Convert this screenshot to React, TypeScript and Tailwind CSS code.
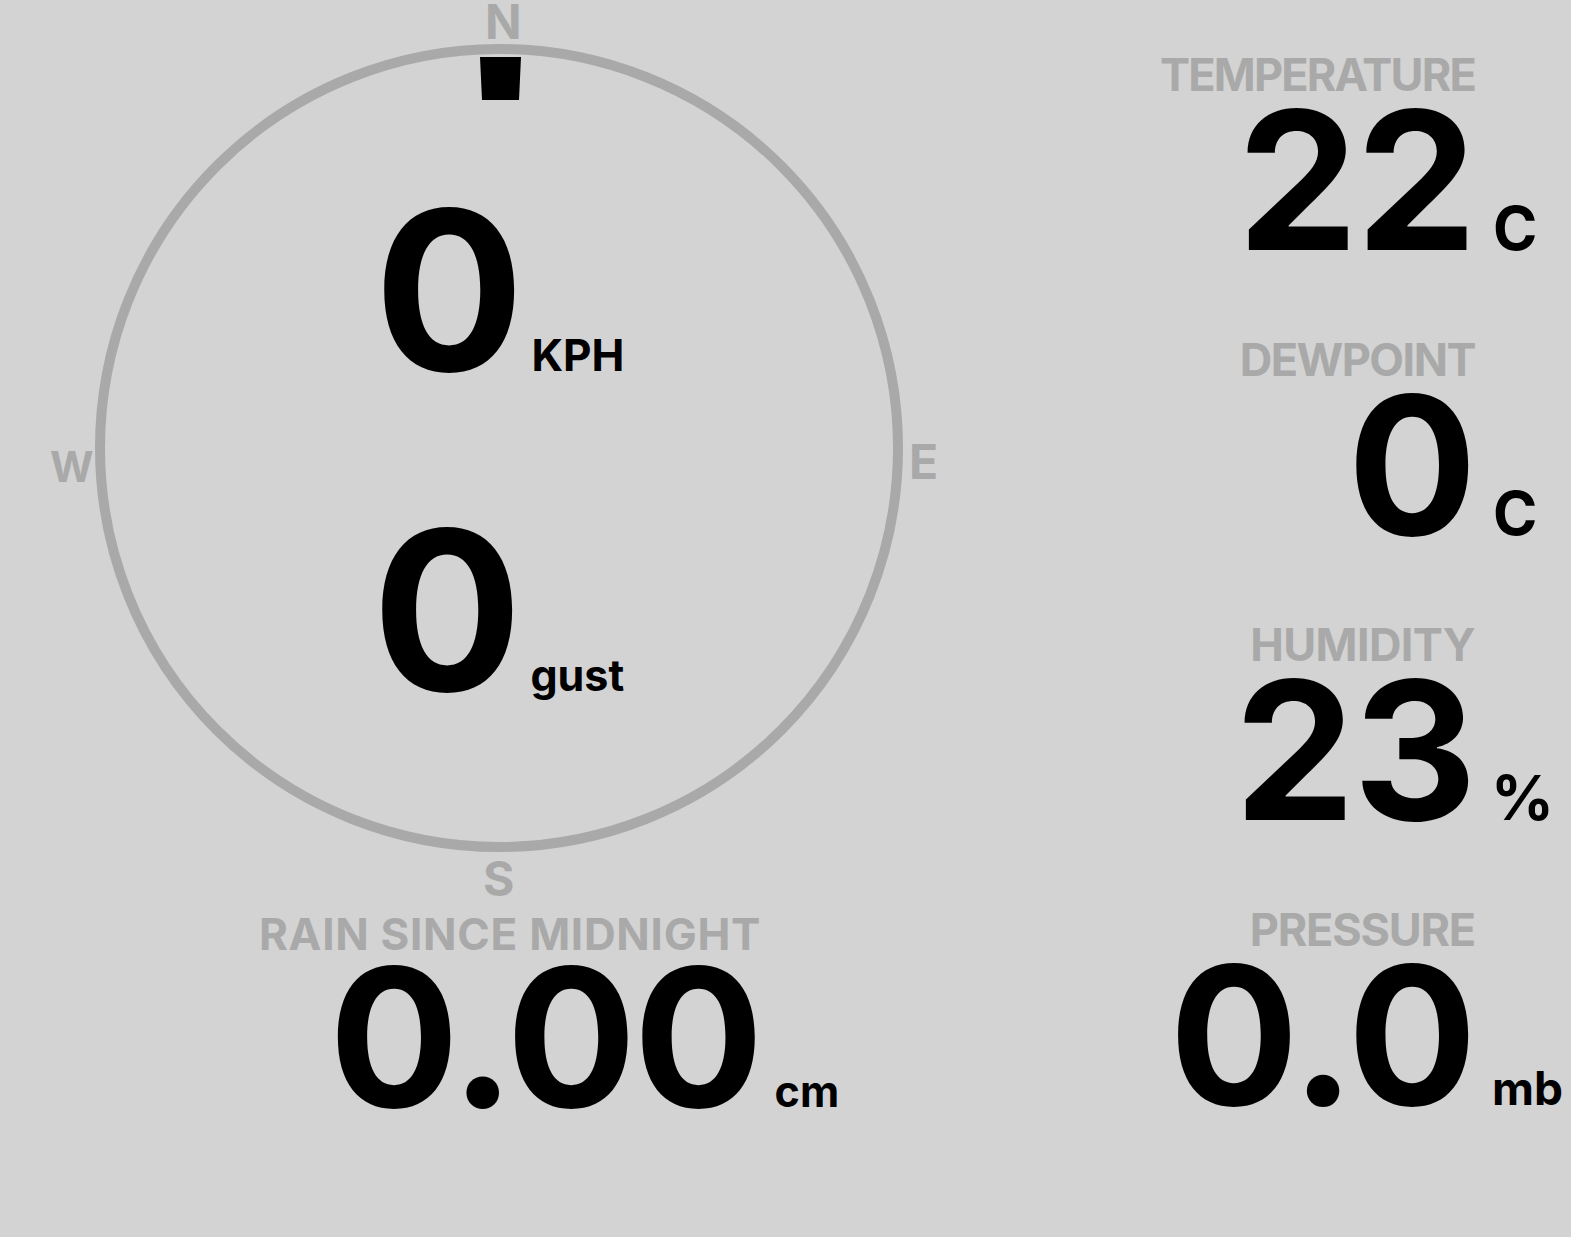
import React from "react";

function Stat({ label, value, unit, unitClass, labelClass }: { label: string; value: string; unit: string; unitClass: string; labelClass: string }) {
  return (
    <div className="grid grid-cols-[1fr_96px] items-baseline">
      <div className={labelClass}>{label}</div>
      <div />
      <div className="text-right text-[192px] leading-[166px] text-black tracking-[-2px]">{value}</div>
      <div className={unitClass}>{unit}</div>
    </div>
  );
}

export default function App() {
  return (
    <div className="min-h-screen w-full bg-[#d3d3d3] flex font-['Inter',sans-serif] font-bold overflow-hidden">
      {/* Left side: compass + rain */}
      <div className="w-[1000px] flex flex-col">
        <div className="relative h-[912px]">
          <svg className="absolute left-0 top-0" width="1000" height="912" viewBox="0 0 1000 912">
            <circle cx="499" cy="448" r="399" fill="none" stroke="#a9a9a9" strokeWidth="10" />
            <polygon points="480,57 521,57 519,100 482,100" fill="#000" />
          </svg>
          <span className="absolute left-[485px] top-[4px] text-[48px] leading-[36px] text-[#a9a9a9]">N</span>
          <span className="absolute left-[909px] top-[438px] text-[48px] leading-none text-[#a9a9a9]">E</span>
          <span className="absolute left-[483px] top-[855px] text-[48px] leading-none text-[#a9a9a9]">S</span>
          <span className="absolute left-[50px] top-[446px] text-[42px] leading-none text-[#a9a9a9]">W</span>

          <div className="relative flex flex-col gap-[97px] pt-[179px] pl-[374px]">
            <div className="flex items-baseline gap-[7px]">
              <span className="text-[223px] leading-none text-black">0</span>
              <span className="text-[44px] leading-none text-black">KPH</span>
            </div>
            <div className="flex items-baseline gap-[8px] -ml-[2px]">
              <span className="text-[223px] leading-none text-black">0</span>
              <span className="text-[43px] leading-none text-black">gust</span>
            </div>
          </div>
        </div>
        <div className="flex flex-col">
          <div className="pl-[259px] text-[44px] leading-none text-[#a9a9a9] tracking-[0.7px]">RAIN SINCE MIDNIGHT</div>
          <div className="flex items-baseline gap-[14px] pl-[329px]">
            <span className="text-[193px] leading-[163px] text-black tracking-[-3px]">0.00</span>
            <span className="text-[43px] leading-none text-black">cm</span>
          </div>
        </div>
      </div>

      {/* Right side: stats */}
      <div className="flex-1 flex flex-col gap-[74px] pt-[52px]">
        <Stat
          label="TEMPERATURE"
          labelClass="text-right text-[45px] leading-none text-[#a9a9a9] tracking-[-1.8px]"
          value="22"
          unit="C"
          unitClass="pl-[18px] text-[60px] leading-none text-black"
        />
        <Stat
          label="DEWPOINT"
          labelClass="text-right text-[45px] leading-none text-[#a9a9a9] tracking-[-1.5px]"
          value="0"
          unit="C"
          unitClass="pl-[18px] text-[60px] leading-none text-black"
        />
        <Stat
          label="HUMIDITY"
          labelClass="text-right text-[45px] leading-none text-[#a9a9a9] tracking-[-0.6px]"
          value="23"
          unit="%"
          unitClass="pl-[16px] text-[62px] leading-none text-black"
        />
        <Stat
          label="PRESSURE"
          labelClass="text-right text-[45px] leading-none text-[#a9a9a9] tracking-[-1.2px]"
          value="0.0"
          unit="mb"
          unitClass="pl-[17px] text-[46px] leading-none text-black"
        />
      </div>
    </div>
  );
}
